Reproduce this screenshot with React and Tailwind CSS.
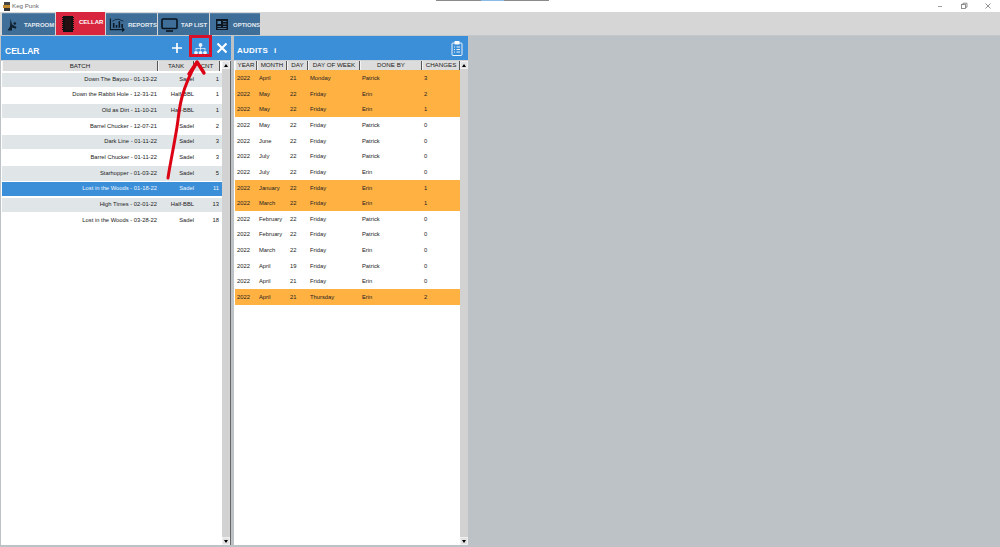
import React from "react";

const cellar = [
  ["Down The Bayou - 01-13-22", "Sadel", "1"],
  ["Down the Rabbit Hole - 12-31-21", "Half-BBL", "1"],
  ["Old as Dirt - 11-10-21", "Half-BBL", "1"],
  ["Barrel Chucker - 12-07-21", "Sadel", "2"],
  ["Dark Line - 01-11-22", "Sadel", "3"],
  ["Barrel Chucker - 01-11-22", "Sadel", "3"],
  ["Starhopper - 01-03-22", "Sadel", "5"],
  ["Lost in the Woods - 01-18-22", "Sadel", "11"],
  ["High Times - 02-01-22", "Half-BBL", "13"],
  ["Lost in the Woods - 03-28-22", "Sadel", "18"],
];

const audits = [
  ["2022", "April", "21", "Monday", "Patrick", "3", 1],
  ["2022", "May", "22", "Friday", "Erin", "2", 1],
  ["2022", "May", "22", "Friday", "Erin", "1", 1],
  ["2022", "May", "22", "Friday", "Patrick", "0", 0],
  ["2022", "June", "22", "Friday", "Patrick", "0", 0],
  ["2022", "July", "22", "Friday", "Patrick", "0", 0],
  ["2022", "July", "22", "Friday", "Erin", "0", 0],
  ["2022", "January", "22", "Friday", "Erin", "1", 1],
  ["2022", "March", "22", "Friday", "Erin", "1", 1],
  ["2022", "February", "22", "Friday", "Patrick", "0", 0],
  ["2022", "February", "22", "Friday", "Patrick", "0", 0],
  ["2022", "March", "22", "Friday", "Erin", "0", 0],
  ["2022", "April", "19", "Friday", "Patrick", "0", 0],
  ["2022", "April", "21", "Friday", "Erin", "0", 0],
  ["2022", "April", "21", "Thursday", "Erin", "2", 1],
];

const Th = ({ children, h }) => (
  <div className={`flex items-center justify-center overflow-hidden whitespace-nowrap border-x border-x-[#f4f4f4] border-r-[#555] bg-[#dcdcdc] text-[6.200px] leading-none text-[#222] ${h}`}>
    {children}
  </div>
);

const ScrollBtn = ({ up }) => (
  <div className="flex h-[8px] items-center justify-center border border-[#f0f0f0] bg-[#e2e2e2]">
    {up ? (
      <div className="h-0 w-0 border-x-[2.500px] border-b-[3px] border-x-transparent border-b-black" />
    ) : (
      <div className="h-0 w-0 border-x-[2.500px] border-t-[3px] border-x-transparent border-t-black" />
    )}
  </div>
);

const Scrollbar = () => (
  <div className="flex w-[8px] shrink-0 flex-col justify-between bg-[#d2d2d2]">
    <ScrollBtn up />
    <ScrollBtn />
  </div>
);

const Tab = ({ cls, active, label, icon }) => (
  <div
    className={`flex items-center ${cls} ${
      active
        ? "-mt-px h-[23px] bg-[#d7263d] text-white"
        : "h-[22px] border-t border-[#5f86a8] bg-[#3f6f99] text-[#e4ebf1]"
    }`}
  >
    {icon}
    <span className={`whitespace-nowrap text-[6px] font-bold leading-none ${active ? "-mt-[3px]" : ""}`}>{label}</span>
  </div>
);

export default function App() {
  return (
    <div className="flex h-[547px] w-[1000px] flex-col overflow-hidden bg-[#bcc2c6] font-['Liberation_Sans',sans-serif]">
      {/* title bar */}
      <div className="relative flex h-[12px] shrink-0 items-center bg-white pl-[3px]">
        <svg width="8" height="9" viewBox="0 0 8 9">
          <rect x="1" y="0" width="6" height="3" fill="#444" />
          <rect x="0" y="3" width="7" height="3" fill="#c08a2e" />
          <rect x="1" y="6" width="6" height="3" fill="#333" />
        </svg>
        <span className="ml-[1px] text-[6.200px] leading-none text-[#666]">Keg Punk</span>
        <div className="absolute left-[436px] top-0 flex h-px w-[113px] bg-[#8a8a8a]">
          <div className="ml-[45px] h-px w-[23px] bg-[#8bbce8]" />
        </div>
        <div className="absolute right-[8px] top-[2px] flex items-center gap-[16px]">
          <svg width="8" height="8" viewBox="0 0 8 8"><path d="M2 4.500h4" stroke="#888" strokeWidth="0.800" /></svg>
          <svg width="8" height="8" viewBox="0 0 8 8" fill="none" stroke="#777" strokeWidth="0.800"><rect x="1.500" y="2.500" width="4" height="4" /><path d="M3 2.500V1.200h4v4H5.500" /></svg>
          <svg width="8" height="8" viewBox="0 0 8 8"><path d="M1.500 1.500l5 5M6.500 1.500l-5 5" stroke="#777" strokeWidth="0.800" /></svg>
        </div>
      </div>

      {/* toolbar */}
      <div className="flex h-[24px] shrink-0 items-start gap-px border-b border-[#c4c8cb] bg-[#d6d6d6] pl-[2px] pt-px">
        <Tab
          cls="w-[53px] gap-[6px] pl-[5px]"
          label="TAPROOM"
          icon={
            <svg width="11" height="13" viewBox="0 0 11 13" fill="#10202e">
              <path d="M3.500 0.500l1.500 6 4.500 2.500-.8 1.800-3.700-1.300L5 12.500H0.500L3 8.500z" />
              <circle cx="7.800" cy="5.500" r="1.300" />
            </svg>
          }
        />
        <Tab
          cls="w-[49px] gap-[5px] pl-[6px]"
          active
          label="CELLAR"
          icon={
            <svg width="12" height="16" viewBox="0 0 12 16">
              <rect x="1" y="0" width="10" height="16" fill="#111" />
              <path d="M0.500 1v14M11.500 1v14" stroke="#111" strokeWidth="1" strokeDasharray="1 1" />
              <rect x="3" y="2" width="6" height="12" fill="#241013" />
            </svg>
          }
        />
        <Tab
          cls="w-[51px] gap-[3px] pl-[3px]"
          label="REPORTS"
          icon={
            <svg width="17" height="15" viewBox="0 0 17 15" fill="none" stroke="#0b1a26">
              <path d="M1.500 1v12h14M14 11l2 2-2 2" strokeWidth="1.300" />
              <path d="M5 11V6M8 11V8M11 11V4M14 11V7" strokeWidth="1.700" />
              <path d="M3.500 4l4-2 3 0 5 2" strokeWidth="0.800" />
            </svg>
          }
        />
        <Tab
          cls="w-[51px] gap-[3px] pl-[3px]"
          label="TAP LIST"
          icon={
            <svg width="17" height="14" viewBox="0 0 17 14" fill="none">
              <rect x="1" y="1" width="15" height="9.500" rx="1" stroke="#08131d" strokeWidth="1.600" />
              <path d="M5 13h7" stroke="#08131d" strokeWidth="1.600" />
            </svg>
          }
        />
        <Tab
          cls="w-[50px] gap-[5px] pl-[6px]"
          label="OPTIONS"
          icon={
            <svg width="12" height="11" viewBox="0 0 12 11">
              <rect width="12" height="11" fill="#0c1722" />
              <rect x="1.500" y="2" width="3.500" height="3" fill="#4f7fa6" />
              <path d="M7 2.500h3.500M7 5h3.500M7 7.500h3.500M1.500 7.500H5M1.500 9.500h9" stroke="#5b87ab" strokeWidth="0.800" />
            </svg>
          }
        />
      </div>

      {/* main */}
      <div className="relative flex min-h-0 flex-1 items-stretch gap-[3px] pb-[2px] pl-px">
        {/* Cellar */}
        <div className="flex w-[230px] flex-col bg-white">
          <div className="flex h-[24px] shrink-0 items-center bg-[#3b8ed8] pl-[4px] pr-[3px]">
            <span className="mt-[6px] text-[8.500px] font-bold leading-none text-white">CELLAR</span>
            <div className="ml-auto flex items-center">
              <svg width="12" height="12" viewBox="0 0 12 12" className="mr-[11px]">
                <path d="M6 1v10M1 6h10" stroke="#fff" strokeWidth="1.700" />
              </svg>
              <svg width="13" height="12" viewBox="0 0 13 12" fill="#eaf3fb" className="mr-[9px] mt-[2px]">
                <circle cx="6.500" cy="2" r="1.900" />
                <circle cx="2" cy="9.800" r="1.900" />
                <circle cx="6.500" cy="9.800" r="1.900" />
                <circle cx="11" cy="9.800" r="1.900" />
                <path d="M6.100 3h.8v2h4.500v2.500h-.8V5.800H6.900v1.700h-.8V5.800H2.400v1.700h-.8V5h4.500z" />
              </svg>
              <svg width="12" height="12" viewBox="0 0 12 12">
                <path d="M1.500 1.500l9 9M10.500 1.500l-9 9" stroke="#fff" strokeWidth="2.200" />
              </svg>
            </div>
          </div>
          <div className="flex min-h-0 flex-1 border-t border-[#cfd3d6]">
            <div className="min-w-0 flex-1 pl-px">
              <div className="grid grid-cols-[156px_36px_26px]">
                <Th h="h-[10px]">BATCH</Th>
                <Th h="h-[10px]">TANK</Th>
                <Th h="h-[10px]">CNT</Th>
              </div>
              <div>
                {cellar.map((r, i) => {
                  const sel = i === 7;
                  const bg = sel ? "bg-[#3b8ed8] text-[#eef6fd]" : i % 2 === 0 ? "bg-[#e0e5e8] text-[#222]" : "bg-white text-[#222]";
                  return (
                    <div key={i} className="h-[15.670px] pt-[1.500px]">
                      <div className={`grid h-[14.170px] grid-cols-[156px_36px_27px] items-center text-[5.800px] leading-none ${bg}`}>
                        <span className="pr-[1px] text-right">{r[0]}</span>
                        <span className="text-right">{r[1]}</span>
                        <span className="pr-[2px] text-right">{r[2]}</span>
                      </div>
                    </div>
                  );
                })}
              </div>
            </div>
            <Scrollbar />
            <div className="w-px bg-[#666]" />
          </div>
        </div>

        {/* Audits */}
        <div className="flex w-[234px] flex-col bg-white">
          <div className="flex h-[24px] shrink-0 items-center bg-[#3b8ed8] pl-[3px] pr-[5px]">
            <span className="mt-[5px] text-[8px] font-bold leading-none tracking-[0.2px] text-white">AUDITS</span>
            <span className="ml-[6px] mt-[5px] text-[8px] font-bold leading-none text-white">i</span>
            <svg width="12" height="15" viewBox="0 0 12 15" fill="none" stroke="#fff" strokeWidth="0.900" className="ml-auto">
              <rect x="1" y="2" width="10" height="12.500" rx="1" />
              <rect x="4" y="0.500" width="4" height="2.500" fill="#fff" />
              <path d="M3 6h1M5.500 6H9M3 8.500h1M5.500 8.500H9M3 11h1M5.500 11H9" />
            </svg>
          </div>
          <div className="flex min-h-0 flex-1 border-t border-[#cfd3d6]">
            <div className="min-w-0 flex-1 pl-px">
              <div className="grid grid-cols-[22px_30px_21px_52px_62px_38px]">
                <Th h="h-[9px]">YEAR</Th>
                <Th h="h-[9px]">MONTH</Th>
                <Th h="h-[9px]">DAY</Th>
                <Th h="h-[9px]">DAY OF WEEK</Th>
                <Th h="h-[9px]">DONE BY</Th>
                <Th h="h-[9px]">CHANGES</Th>
              </div>
              <div>
                {audits.map((r, i) => (
                  <div
                    key={i}
                    className={`grid h-[15.670px] grid-cols-[22px_30px_21px_52px_62px_38px] items-center pt-[2px] text-[5.800px] leading-none text-[#222] ${
                      r[6] ? "bg-[#ffb142]" : "bg-white"
                    }`}
                  >
                    <span className="pl-[2px]">{r[0]}</span>
                    <span className="pl-[2px]">{r[1]}</span>
                    <span className="pl-[3px]">{r[2]}</span>
                    <span className="pl-[2px]">{r[3]}</span>
                    <span className="pl-[2px]">{r[4]}</span>
                    <span className="pl-[2px]">{r[5]}</span>
                  </div>
                ))}
              </div>
            </div>
            <Scrollbar />
          </div>
        </div>

        {/* annotation */}
        <div className="absolute -top-px left-[189px] h-[22px] w-[23px] border-[3px] border-[#d8102a]" />
        <svg className="absolute left-[160px] top-[22px]" width="50" height="130" viewBox="0 0 50 130" fill="none">
          <path d="M8 120C10 106 14 88 17 69C19 56 19 50 22 39C25 28 30 16 36 6" stroke="#dc0414" strokeWidth="3" strokeLinecap="round" />
          <path d="M29 16L37 4L44 15" stroke="#dc0414" strokeWidth="3.400" strokeLinecap="round" strokeLinejoin="round" />
        </svg>
      </div>
    </div>
  );
}
